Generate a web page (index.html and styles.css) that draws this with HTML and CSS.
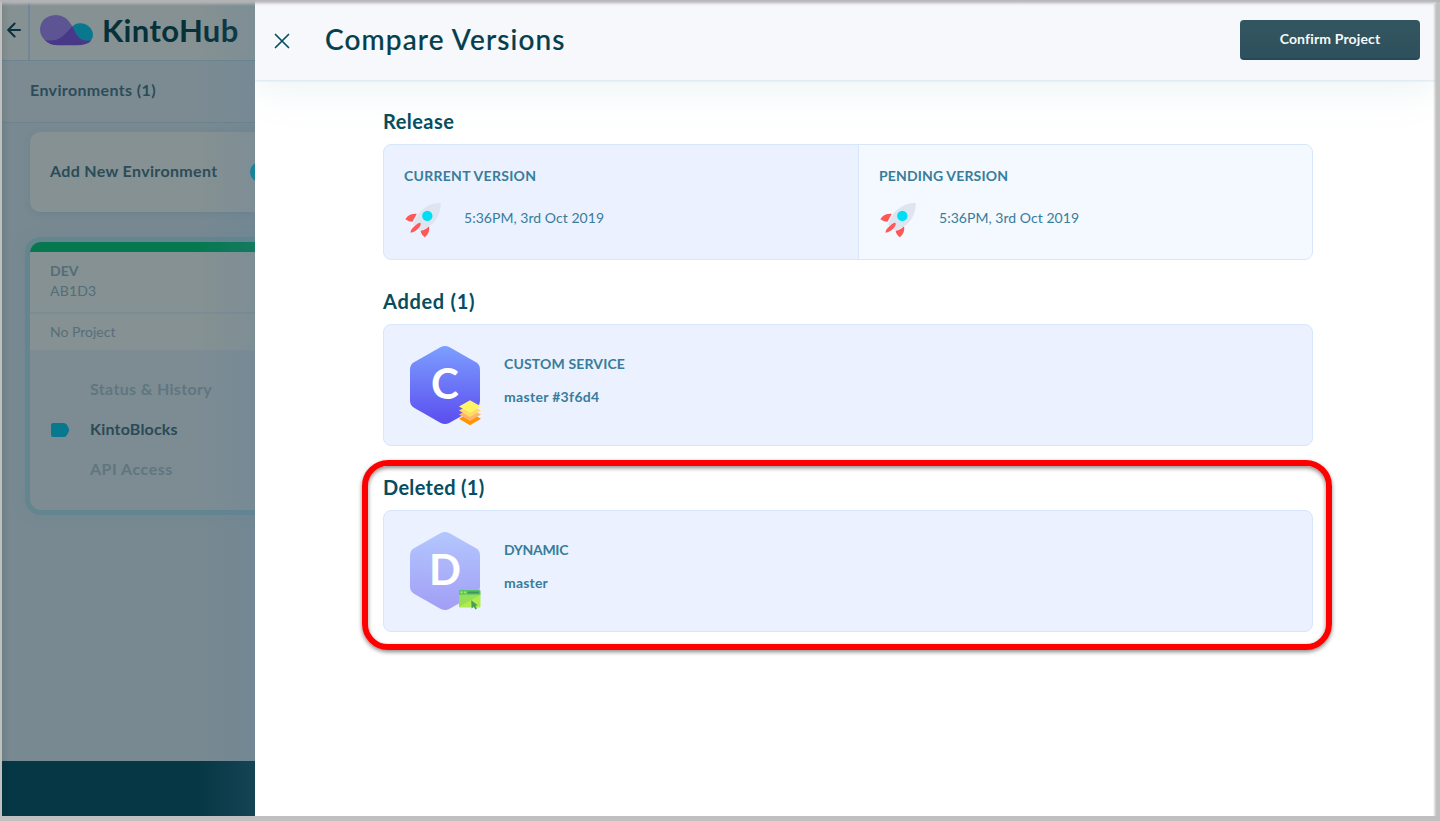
FILE: index.html
```html
<!DOCTYPE html>
<html lang="en">
<head>
<meta charset="utf-8">
<title>KintoHub</title>
<link rel="stylesheet" href="styles.css">
</head>
<body>
<svg width="0" height="0" class="defs" aria-hidden="true">
  <defs>
    <linearGradient id="hexfill" x1="0" y1="0" x2="0" y2="1"><stop offset="0" stop-color="#7c9fff"/><stop offset="1" stop-color="#5b4def"/></linearGradient>
    <symbol id="rocket" viewBox="0 0 36 36">
      <path d="M.3 17.2C2.8 13.3 6.5 11.6 11.7 11.9L7.5 19.8Q4 19.8 .3 17.2Z" fill="#ff5757"/>
      <path d="M15.6 28.7Q20.5 28.3 24 24Q25.5 30.5 19.8 35.2Q16 32.5 15.6 28.7Z" fill="#ff5757"/>
      <path d="M8.2 22.5C11.4 11.2 20.5.6 35.8.9C36 16 26 26 14.2 28.3Z" fill="#dfe5f0"/>
      <path d="M5.6 30.7Q5.2 28.2 9.2 24.6Q12.8 21 15.2 20.8Q16.8 22 14 25.7Q9.8 30.4 5.6 30.7Z" fill="#ff5757"/>
      <circle cx="22.3" cy="13.9" r="5.2" fill="#00def5"/>
    </symbol>
    <symbol id="hexagon" viewBox="0 0 70 78">
      <path d="M30.8 1.1Q35-1 39.2 1.1L66 16.3Q70 18.7 70 23.4V54.6Q70 59.3 66 61.7L39.2 76.9Q35 79 30.8 76.9L4 61.7Q0 59.3 0 54.6V23.4Q0 18.7 4 16.3Z" fill="url(#hexfill)"/>
    </symbol>
  </defs>
</svg>
<div class="window">
  <aside class="sidebar">
    <div class="brandbar">
      <div class="back"><svg width="14" height="16" viewBox="0 0 14 16"><path d="M7.6 1.5L1.2 8L7.6 14.5M1.5 8H13" fill="none" stroke="#08333f" stroke-width="2" stroke-linecap="round" stroke-linejoin="round"/></svg></div>
      <svg class="cloud" width="54" height="31" viewBox="0 0 54 31">
        <path d="M32.4 11.5Q36 7.8 41 8.3C49 9.2 54 15.5 52.8 21.5Q51.5 26.5 47 27L34 23Z" fill="#07788e"/>
        <path d="M16 0Q26 0 32.4 11.2Q36 20 40 23.5Q44 26.5 50.5 25.8Q46 30 36 30H18C9 30 0 24 0 14Q1 1 16 0Z" fill="#5d5493"/>
        <path d="M32.4 11.2Q36 20 40 23.5Q44 26.8 51.5 25.4Q47 30.3 36 30.2H20Q9 30.5 5 25Q15 27 21.5 22Q25 19.5 32.4 11.2Z" fill="#473987"/>
      </svg>
      <span class="wordmark">KintoHub</span>
    </div>
    <div class="envtitle"><span class="t-env">Environments (1)</span></div>
    <div class="envlist">
      <div class="addcard"><span class="t-add">Add New Environment</span><i class="plus"></i></div>
      <div class="envcard">
        <div class="green"></div>
        <div class="envinfo"><b>DEV</b><span class="t-id">AB1D3</span></div>
        <div class="project"><span>No Project</span></div>
        <ul class="menu">
          <li><span class="t-status">Status &amp; History</span></li>
          <li class="active"><svg width="19" height="14" viewBox="0 0 19 14"><path d="M2 0H12.5Q14.5 0 15.7 1.5L17.7 5.3Q18.6 7 17.7 8.7L15.7 12.5Q14.5 14 12.5 14H2Q0 14 0 12V2Q0 0 2 0Z" fill="#07788e"/></svg><span class="t-blocks">KintoBlocks</span></li>
          <li><span class="t-api">API Access</span></li>
        </ul>
      </div>
    </div>
    <div class="footer"></div>
  </aside>
  <div class="drawer">
    <header class="topbar">
      <svg class="close" width="16" height="16" viewBox="0 0 16 16"><path d="M1.5 1.5L14.5 14.5M14.5 1.5L1.5 14.5" stroke="#065064" stroke-width="1.7" stroke-linecap="round"/></svg>
      <h1>Compare Versions</h1>
      <button class="confirm">Confirm Project</button>
    </header>
    <main>
      <section>
        <h2 class="t-release">Release</h2>
        <div class="card versions">
          <div class="version">
            <h3 class="t-current">CURRENT VERSION</h3>
            <div class="when"><svg width="36" height="36"><use href="#rocket"/></svg><span>5:36PM, 3rd Oct 2019</span></div>
          </div>
          <div class="version pending">
            <h3 class="t-pending">PENDING VERSION</h3>
            <div class="when"><svg width="36" height="36"><use href="#rocket"/></svg><span>5:36PM, 3rd Oct 2019</span></div>
          </div>
        </div>
      </section>
      <section>
        <h2 class="t-added">Added (1)</h2>
        <div class="card service">
          <div class="hex">
            <svg class="hexshape" width="70" height="78"><use href="#hexagon"/></svg>
            <span class="letter">C</span>
            <svg class="badge stack" width="24" height="26" viewBox="0 0 24 26">
              <path d="M12 12.5L23 18.8L12 25.2L1 18.8Z" fill="#ff9500"/>
              <path d="M12 8.5L23 14.6L12 21L1 14.6Z" fill="#ffb36b"/>
              <path d="M12 4.5L23 10.6L12 17L1 10.6Z" fill="#ffdc64"/>
              <path d="M12 .3L23 6.4L12 12.8L1 6.4Z" fill="#fff566"/>
            </svg>
          </div>
          <div class="detail"><h3 class="t-custom">CUSTOM SERVICE</h3><b class="t-hash">master #3f6d4</b></div>
        </div>
      </section>
      <section class="marked">
        <h2 class="t-deleted">Deleted (1)</h2>
        <div class="card service">
          <div class="hex">
            <svg class="hexshape faded" width="70" height="78"><use href="#hexagon"/></svg>
            <span class="letter">D</span>
            <svg class="badge browser" width="22" height="20" viewBox="0 0 22 20">
              <path d="M0 4H21.5V16.6Q21.5 17.6 20.5 17.6H1Q0 17.6 0 16.6Z" fill="#b0ec50"/>
              <path d="M0 4.8H21.5L0 16.8Z" fill="#8ed957" opacity=".75"/>
              <path d="M1 0H20.5Q21.5 0 21.5 1V4.8H0V1Q0 0 1 0Z" fill="#58c463"/>
              <circle cx="2.6" cy="2.4" r="1.1" fill="#b0ec50"/><circle cx="6.2" cy="2.4" r="1.1" fill="#b0ec50"/>
              <rect x="8.6" y="1.4" width="11.6" height="2.2" rx="1.1" fill="#429461"/>
              <path d="M12.2 10.2L18.8 15.3L16.3 15.8L18 18.6L16.4 19.6L14.8 16.8L12.6 18.6Z" fill="#4a9d58"/>
            </svg>
          </div>
          <div class="detail"><h3 class="t-dynamic">DYNAMIC</h3><b class="t-master">master</b></div>
        </div>
        <div class="outline"></div>
      </section>
    </main>
  </div>
</div>
<div class="edge"></div>
</body>
</html>
```

FILE: styles.css
```css
* { box-sizing: border-box; }
body { margin: 0; width: 1440px; height: 821px; overflow: hidden; background: #c0c0c1; font-family: Lato, "Open Sans", sans-serif; color: #2b4c58; }
h1, h2, h3, ul { margin: 0; padding: 0; font: inherit; }
span, b, h1, h2, h3 { white-space: nowrap; }
svg { display: block; flex: none; }
.defs { position: absolute; }
.window { display: flex; width: 1436px; height: 816px; padding-left: 2px; }
.edge { position: absolute; inset: 0 0 auto 0; height: 6px; background: linear-gradient(#b4b4b6 0, #b9b9bbd9 35%, #c8c8ca55 65%, #fff0); }
.edge::after { content: ""; position: absolute; right: 4px; top: 4px; width: 3px; height: 812px; background: linear-gradient(90deg, #aaa0, #aaaa); }

.sidebar { position: relative; display: flex; flex-direction: column; width: 253px; background: #778990; overflow: hidden; }
.sidebar::after { content: ""; position: absolute; inset: 0; background: linear-gradient(90deg, #00000012, #0000 8px), linear-gradient(90deg, #5880a000 195px, #5880a02e 253px); }
.brandbar { display: flex; align-items: center; height: 61px; background: #859192; border-bottom: 1px solid #6b8490; }
.back { display: flex; align-items: center; height: 60px; width: 28px; padding-left: 5px; border-right: 2px solid #6f8798; }
.cloud { margin-left: 10px; }
.wordmark { font: 700 31px/60px Lato, sans-serif; letter-spacing: .35px; margin-left: 8px; color: #06313b; }
.envtitle { height: 62px; padding-left: 28px; line-height: 58px; font-size: 16px; font-weight: 700; background: #7c8b92; border-bottom: 1px solid #70828b; }
.t-env { letter-spacing: .36px; }
.t-add { letter-spacing: .34px; padding-bottom: 3px; }
.envlist { flex: 1; padding: 9px 0 0 23px; background: #788991; }
.addcard { display: flex; align-items: center; height: 80px; margin-left: 5px; padding-left: 20px; font-weight: 700; font-size: 16px; background: #859192; border-radius: 10px 0 0 10px; box-shadow: 0 2px 6px #50708040; position: relative; }
.plus { position: absolute; left: 220px; top: 30px; width: 20px; height: 20px; border-radius: 50%; background: #07859b; }
.envcard { margin-top: 25px; width: 300px; height: 278px; border: 5px solid #62858f; border-radius: 16px; background: #7d8c93; overflow: hidden; box-shadow: 0 0 14px #6080903d; }
.green { height: 10px; background: #067850; }
.envinfo { display: flex; flex-direction: column; height: 62px; padding: 9px 20px 0; font-size: 14px; line-height: 20px; color: #536d79; background: #859192; border-bottom: 2px solid #7c8c93; }
.t-id { letter-spacing: .2px; }
.project { height: 36px; padding-left: 20px; line-height: 35px; font-size: 14px; color: #586f7b; background: #859192; }
.menu { list-style: none; padding-top: 20px; font-size: 16px; font-weight: 700; color: #60767f; }
.menu li { display: flex; align-items: center; height: 40px; padding-left: 60px; }
.menu span { padding-bottom: 3px; }
.t-status, .t-api { letter-spacing: .35px; }
.t-api { letter-spacing: .5px; }
.t-blocks { letter-spacing: .2px; }
.menu .active { padding-left: 21px; gap: 20px; color: #294a57; }
.footer { height: 55px; background: #063744; }

.drawer { width: 1181px; background: #fff; }
.topbar { position: relative; display: flex; align-items: center; height: 80px; padding: 0 16px 0 19px; background: #f7f8fc; box-shadow: 0 1px 2px #d8e7ee, 0 5px 40px #dbe9eca0; clip-path: inset(0 0 -50px 0); }
.close { margin-top: 2px; }
h1 { flex: 1; margin: 0 0 2px 35px; font-size: 28px; font-weight: 500; letter-spacing: 1.13px; -webkit-text-stroke: .2px #043f4c; color: #043f4c; line-height: 40px; }
.confirm { width: 180px; height: 40px; padding: 0 0 1px; border: 0; border-bottom: 2px solid #26495a; border-radius: 4px; font: 700 14px Lato, sans-serif; letter-spacing: .15px; color: #f5fafb; background: linear-gradient(#32565f, #2f505d); }
main { position: relative; display: flex; flex-direction: column; gap: 18px; width: 930px; margin-left: 128px; padding-top: 18px; color: #387c9b; }
section { position: relative; }
h2 { height: 46px; line-height: 46px; font-size: 20px; font-weight: 700; color: #054d60; }
.t-release { letter-spacing: .45px; }
.t-added { letter-spacing: .7px; }
.t-deleted { letter-spacing: .3px; }
.card { display: flex; border: 1px solid #d7e6fb; border-radius: 8px; background: #ebf1fe; overflow: hidden; }
.versions { height: 116px; }
.version { width: 474px; padding: 21px 20px 0; }
.pending { flex: 1; background: #f4f8ff; border-left: 1px solid #d7e6fb; }
h3 { line-height: 20px; font-size: 14px; font-weight: 700; }
.t-current { letter-spacing: .28px; }
.t-pending { letter-spacing: .15px; }
.t-custom { letter-spacing: .15px; }
.t-dynamic { letter-spacing: -.3px; }
.t-hash { letter-spacing: .32px; }
.t-master { letter-spacing: .2px; }
.when { display: flex; align-items: center; gap: 23px; padding: 16px 0 0 1px; font-size: 14px; letter-spacing: .04px; }
.when span { line-height: 20px; margin-top: -5px; }
.service { height: 122px; padding: 21px 0 0 26px; gap: 24px; }
.hex { position: relative; width: 70px; height: 78px; }
.faded { opacity: .5; }
.letter { position: absolute; inset: 0; text-align: center; line-height: 75px; font-size: 42px; font-weight: 700; color: #fff; }
.badge { position: absolute; }
.stack { left: 48px; top: 54px; }
.browser { left: 49px; top: 58px; }
.detail { display: flex; flex-direction: column; gap: 13px; padding-top: 8px; font-size: 14px; line-height: 20px; }
.outline { position: absolute; inset: -4px -19px -18px -21px; border: 6px solid #f00; border-radius: 26px; box-shadow: 0 2px 4px #0007, inset 0 2px 4px #0007; }
```
